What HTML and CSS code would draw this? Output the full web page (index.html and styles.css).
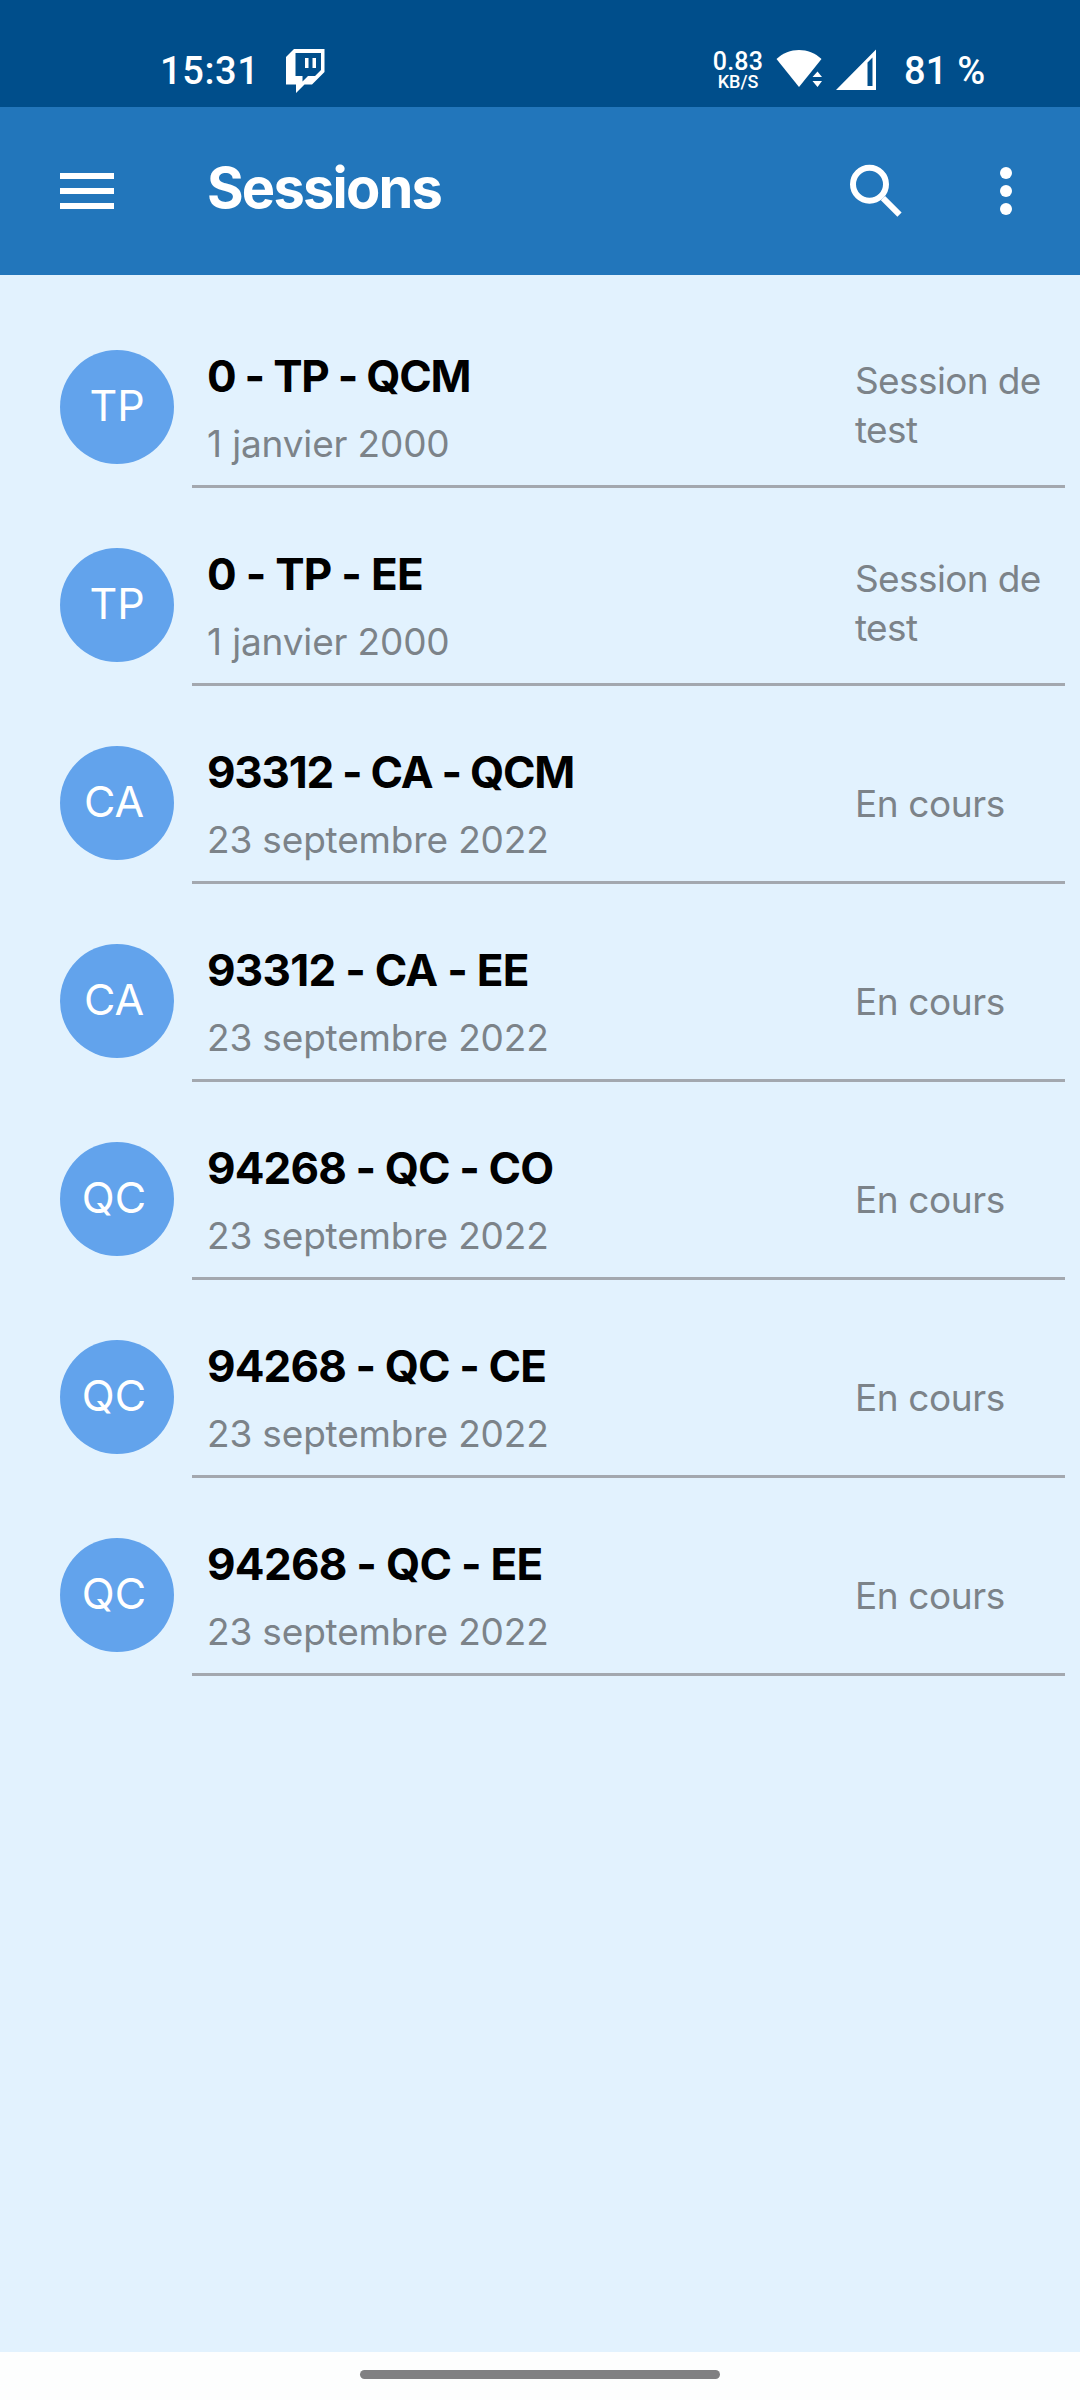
FILE: index.html
```
<!DOCTYPE html>
<html lang="fr">
<head>
<meta charset="utf-8">
<title>Sessions</title>
<link rel="stylesheet" href="styles.css">
</head>
<body>
<div class="screen">
  <div class="statusbar">
    <span class="time">15:31</span>
    <svg class="twitch" width="40" height="46" viewBox="0 0 40 46">
      <path fill="#fff" fill-rule="evenodd" d="M8 1H38.500V24L26 36.500H18.500L10 45V36.500H0V9ZM9.500 5V28H16.500V33.500L22 28H29L35 22V5ZM19 10H22.500V20H19ZM26.500 10H30V20H26.500Z"/>
    </svg>
    <div class="network"><span class="rate">0.83</span><span class="unit">KB/S</span></div>
    <svg class="wifi" width="48" height="42" viewBox="0 0 48 42">
      <path fill="#fff" d="M.5 10C13-2 33-2 45.500 10L35.500 22.500 23 38Z"/>
      <path fill="#fff" d="M36.500 28 41.500 22.500 46 28ZM36.500 32H46L41.500 38Z"/>
    </svg>
    <svg class="cell" width="41" height="42" viewBox="0 0 41 42">
      <path fill="#fff" fill-rule="evenodd" d="M0 41 40 .5V41ZM31.500 13.500V37H36.500V8.500Z"/>
    </svg>
    <span class="battery">81 %</span>
  </div>

  <header class="appbar">
    <svg class="menu" width="54" height="36" viewBox="0 0 54 36">
      <path fill="#fff" d="M0 0H54V6H0ZM0 15H54V21H0ZM0 30H54V36H0Z"/>
    </svg>
    <h1 class="heading">Sessions</h1>
    <svg class="search" width="54" height="54" viewBox="0 0 54 54" fill="none" stroke="#fff" stroke-width="6">
      <circle cx="20.500" cy="20.300" r="16.500"/>
      <path d="M34 34.200 50.500 50.700"/>
    </svg>
    <svg class="more" width="12" height="48" viewBox="0 0 12 48" fill="#fff">
      <circle cx="6" cy="6" r="6"/><circle cx="6" cy="24" r="6"/><circle cx="6" cy="42" r="6"/>
    </svg>
  </header>

  <main class="list">
    <div class="row">
      <div class="avatar">TP</div>
      <div class="body">
        <div class="info"><div class="title tight">0 - TP - QCM</div><div class="date">1 janvier 2000</div></div>
        <div class="state two">Session de test</div>
      </div>
    </div>
    <div class="row">
      <div class="avatar">TP</div>
      <div class="body">
        <div class="info"><div class="title">0 - TP - EE</div><div class="date">1 janvier 2000</div></div>
        <div class="state two">Session de test</div>
      </div>
    </div>
    <div class="row">
      <div class="avatar wide">CA</div>
      <div class="body">
        <div class="info"><div class="title tight">93312 - CA - QCM</div><div class="date">23 septembre 2022</div></div>
        <div class="state">En cours</div>
      </div>
    </div>
    <div class="row">
      <div class="avatar wide">CA</div>
      <div class="body">
        <div class="info"><div class="title">93312 - CA - EE</div><div class="date">23 septembre 2022</div></div>
        <div class="state">En cours</div>
      </div>
    </div>
    <div class="row">
      <div class="avatar wide">QC</div>
      <div class="body">
        <div class="info"><div class="title snug">94268 - QC - CO</div><div class="date">23 septembre 2022</div></div>
        <div class="state">En cours</div>
      </div>
    </div>
    <div class="row">
      <div class="avatar wide">QC</div>
      <div class="body">
        <div class="info"><div class="title snug">94268 - QC - CE</div><div class="date">23 septembre 2022</div></div>
        <div class="state">En cours</div>
      </div>
    </div>
    <div class="row">
      <div class="avatar wide">QC</div>
      <div class="body">
        <div class="info"><div class="title">94268 - QC - EE</div><div class="date">23 septembre 2022</div></div>
        <div class="state">En cours</div>
      </div>
    </div>
  </main>

  <footer class="navbar"><div class="handle"></div></footer>
</div>
</body>
</html>
```
FILE: styles.css
```
* { box-sizing: border-box; }
body { margin: 0; font-family: Inter, "Liberation Sans", sans-serif; }
svg { display: block; flex: none; }

.screen {
  width: 1080px;
  height: 2400px;
  display: flex;
  flex-direction: column;
  background: #e2f2fe;
  overflow: hidden;
}

.statusbar {
  height: 107px;
  flex: none;
  display: flex;
  align-items: center;
  padding: 34px 0 0 160px;
  background: #004e8b;
  color: #fff;
  font: 500 38px/38px Roboto, sans-serif;
}
.time { width: 126px; letter-spacing: .6px; }
.network {
  width: 60px;
  margin-left: auto;
  display: flex;
  flex-direction: column;
  align-items: center;
  line-height: 21px;
}
.rate { font-size: 25px; letter-spacing: .2px; }
.unit { font-size: 18px; line-height: 19px; }
.wifi { margin-left: 8px; margin-bottom: 2px; }
.cell { margin-left: 12px; margin-bottom: 2px; }
.battery { width: 176px; margin-left: 27px; white-space: pre; letter-spacing: .2px; }

.appbar {
  height: 168px;
  flex: none;
  display: flex;
  align-items: center;
  padding: 0 68px 0 60px;
  background: #2276bb;
}
.heading {
  margin: 0 auto 6px 93px;
  color: #fff;
  font-size: 56px;
  line-height: 64px;
  font-weight: 700;
  letter-spacing: -1.8px;
}
.search { margin-right: 97px; }

.list { flex: 1; padding-top: 15px; }
.row {
  height: 198px;
  display: flex;
  padding: 0 15px 0 60px;
}
.avatar {
  width: 114px;
  height: 114px;
  flex: none;
  margin: 60px 18px 0 0;
  padding-bottom: 5px;
  display: flex;
  align-items: center;
  justify-content: center;
  border-radius: 50%;
  background: #62a3ec;
  color: #fff;
  font-size: 43px;
}
.avatar.wide { padding-right: 6px; }
.body {
  flex: 1;
  display: flex;
  align-items: center;
  padding-left: 15px;
  border-bottom: 3px solid #a3a8af;
}
.info { flex: 1; align-self: flex-start; padding-top: 60px; }
.title {
  color: #000;
  font-size: 44px;
  line-height: 52px;
  font-weight: 700;
  letter-spacing: -.72px;
}
.title.snug { letter-spacing: -.87px; }
.title.tight { letter-spacing: -1.24px; }
.date {
  margin-top: 18px;
  color: #7c8389;
  font-size: 37px;
  line-height: 48px;
  letter-spacing: -.16px;
}
.state {
  width: 210px;
  padding-top: 40px;
  color: #7c8389;
  font-size: 37px;
  line-height: 49px;
  letter-spacing: -.42px;
}
.state.two { padding-top: 35px; letter-spacing: -.62px; }

.navbar {
  height: 48px;
  flex: none;
  padding-top: 18px;
  background: #fdfefe;
}
.handle {
  width: 360px;
  height: 9px;
  margin: 0 auto;
  border-radius: 5px;
  background: #808082;
}
```
